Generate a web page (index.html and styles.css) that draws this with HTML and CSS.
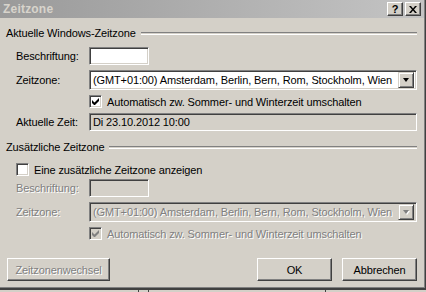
FILE: index.html
```html
<!DOCTYPE html>
<html lang="de">
<head>
<meta charset="utf-8">
<title>Zeitzone</title>
<link rel="stylesheet" href="styles.css">
</head>
<body>
<div class="window">
  <div class="titlebar">
    <span class="title">Zeitzone</span>
    <div class="tbtns">
      <span class="tbtn">?</span>
      <span class="tbtn"><svg width="8" height="7" viewBox="0 0 8 7"><path d="M0 0h2l2 2.5L6 0h2L5 3.5 8 7H6L4 4.5 2 7H0l3-3.5z" fill="#000"/></svg></span>
    </div>
  </div>
  <div class="content">
    <div class="group-head"><span>Aktuelle Windows-Zeitzone</span><i class="etch"></i></div>
    <div class="row row-label">
      <span class="lbl">Beschriftung:</span>
      <div class="field short"></div>
    </div>
    <div class="row row-combo">
      <span class="lbl">Zeitzone:</span>
      <div class="combo">
        <span class="combo-text">(GMT+01:00) Amsterdam, Berlin, Bern, Rom, Stockholm, Wien</span>
        <span class="dd"><i class="arrow"></i></span>
      </div>
    </div>
    <div class="row row-check indent">
      <span class="check"><svg width="7" height="7" viewBox="0 0 7 7"><path d="M0 2v3l2 2h1l4-4V0L2.5 4.5z" fill="#000"/></svg></span>
      <span class="ctext">Automatisch zw. Sommer- und Winterzeit umschalten</span>
    </div>
    <div class="row row-time">
      <span class="lbl">Aktuelle Zeit:</span>
      <div class="field readonly">Di 23.10.2012 10:00</div>
    </div>

    <div class="group-head second"><span>Zusätzliche Zeitzone</span><i class="etch"></i></div>
    <div class="row row-check2">
      <span class="check"></span>
      <span class="ctext">Eine zusätzliche Zeitzone anzeigen</span>
    </div>
    <div class="row row-label2 disabled">
      <span class="lbl">Beschriftung:</span>
      <div class="field short off"></div>
    </div>
    <div class="row row-combo2 disabled">
      <span class="lbl">Zeitzone:</span>
      <div class="combo off">
        <span class="combo-text">(GMT+01:00) Amsterdam, Berlin, Bern, Rom, Stockholm, Wien</span>
        <span class="dd"><i class="arrow"></i></span>
      </div>
    </div>
    <div class="row row-check3 indent disabled">
      <span class="check off"><svg width="7" height="7" viewBox="0 0 7 7"><path d="M0 2v3l2 2h1l4-4V0L2.5 4.5z" fill="#808080"/></svg></span>
      <span class="ctext">Automatisch zw. Sommer- und Winterzeit umschalten</span>
    </div>

    <div class="buttons">
      <span class="btn wide disabled-btn">Zeitzonenwechsel</span>
      <span class="spacer"></span>
      <span class="btn">OK</span>
      <span class="btn">Abbrechen</span>
    </div>
  </div>
</div>
<div class="strip">
  <span class="seg s1"></span><span class="seg s2"></span><span class="seg s3"></span>
</div>
</body>
</html>
```

FILE: styles.css
```css
html, body {
  margin: 0;
  padding: 0;
  background: #d4d0c8;
}
body {
  width: 426px;
  height: 292px;
  overflow: hidden;
  font-family: "Liberation Sans", Arial, sans-serif;
  font-size: 11px;
  letter-spacing: -0.12px;
  color: #000;
}
.window {
  width: 426px;
  height: 289px;
  box-sizing: border-box;
  background: #d4d0c8;
  border-right: 1px solid #404040;
  border-bottom: 1px solid #404040;
  box-shadow: inset -1px -1px #808080;
  display: flex;
  flex-direction: column;
}
.titlebar {
  height: 18px;
  margin-right: 1px;
  background: linear-gradient(to right, #9a9a9a, #c4c4c4);
  display: flex;
  align-items: center;
  justify-content: space-between;
  padding: 0 3px 0 3px;
}
.title {
  color: #d8d4cc;
  font-weight: bold;
  font-size: 12px;
  letter-spacing: 0.2px;
}
.tbtns {
  display: flex;
  gap: 2px;
}
.tbtn {
  width: 16px;
  height: 14px;
  box-sizing: border-box;
  background: #d4d0c8;
  border: 1px solid;
  border-color: #fff #404040 #404040 #fff;
  box-shadow: inset -1px -1px #808080;
  display: flex;
  align-items: center;
  justify-content: center;
  font-weight: bold;
  font-size: 11px;
  line-height: 1;
}
.content {
  padding: 0 8px 0 6px;
  display: flex;
  flex-direction: column;
}
.group-head {
  display: flex;
  align-items: center;
  height: 14px;
  margin-top: 8px;
}
.group-head.second {
  margin-top: 9px;
}
.etch {
  flex: 1;
  height: 1px;
  margin-left: 5px;
  border-top: 1px solid #808080;
  border-bottom: 1px solid #fff;
}
.row {
  display: flex;
  align-items: center;
  padding-left: 10px;
}
.lbl {
  width: 73px;
  flex: none;
}
.indent {
  padding-left: 83px;
}
.field {
  box-sizing: border-box;
  height: 18px;
  border: 1px solid;
  border-color: #808080 #fff #fff #808080;
  box-shadow: inset 1px 1px #404040, inset -1px -1px #d4d0c8;
  background: #fff;
}
.field.short {
  width: 60px;
}
.field.off {
  background: #d4d0c8;
}
.field.readonly {
  flex: 1;
  background: #d4d0c8;
  padding-left: 3px;
  display: flex;
  align-items: center;
}
.combo {
  flex: 1;
  box-sizing: border-box;
  height: 20px;
  border: 1px solid;
  border-color: #808080 #fff #fff #808080;
  box-shadow: inset 1px 1px #404040, inset -1px -1px #d4d0c8;
  background: #fff;
  display: flex;
  align-items: center;
  padding: 2px;
}
.combo.off {
  background: #d4d0c8;
}
.combo-text {
  flex: 1;
  padding-left: 1px;
  white-space: nowrap;
  overflow: hidden;
}
.dd {
  width: 16px;
  height: 16px;
  box-sizing: border-box;
  background: #d4d0c8;
  border: 1px solid;
  border-color: #d4d0c8 #404040 #404040 #d4d0c8;
  box-shadow: inset 1px 1px #fff, inset -1px -1px #808080;
  display: flex;
  align-items: center;
  justify-content: center;
}
.arrow {
  width: 0;
  height: 0;
  border-left: 3.5px solid transparent;
  border-right: 3.5px solid transparent;
  border-top: 4px solid #000;
}
.off .arrow {
  border-top-color: #808080;
  filter: drop-shadow(1px 1px 0 #fff);
}
.check {
  width: 13px;
  height: 13px;
  flex: none;
  box-sizing: border-box;
  border: 1px solid;
  border-color: #808080 #fff #fff #808080;
  box-shadow: inset 1px 1px #404040, inset -1px -1px #d4d0c8;
  background: #fff;
  display: flex;
  align-items: center;
  justify-content: center;
}
.check.off {
  background: #d4d0c8;
}
.ctext {
  margin-left: 5px;
}
.row-label { margin-top: 7px; }
.row-combo { margin-top: 5px; }
.row-check { margin-top: 5px; height: 13px; }
.row-time { margin-top: 5px; }
.row-check2 { margin-top: 9px; height: 13px; }
.row-label2 { margin-top: 3px; }
.row-combo2 { margin-top: 5px; }
.row-check3 { margin-top: 5px; height: 13px; }
.disabled {
  color: #808080;
  text-shadow: 1px 1px 0 #fff;
}
.buttons {
  display: flex;
  align-items: center;
  gap: 10px;
  margin-top: 18px;
  padding-left: 1px;
}
.spacer {
  flex: 1;
}
.btn {
  box-sizing: border-box;
  width: 75px;
  height: 23px;
  border: 1px solid;
  border-color: #fff #404040 #404040 #fff;
  box-shadow: inset -1px -1px #808080;
  display: flex;
  align-items: center;
  justify-content: center;
}
.btn.wide {
  width: 103px;
}
.disabled-btn {
  color: #808080;
  text-shadow: 1px 1px 0 #fff;
}
.strip {
  height: 3px;
  border-top: 1px solid #404040;
  display: flex;
  position: relative;
}
.seg {
  position: absolute;
  top: 0;
  width: 1px;
  height: 3px;
  background: #404040;
}
.s1 { left: 138px; }
.s2 { left: 148px; }
.s3 { left: 325px; }
```
